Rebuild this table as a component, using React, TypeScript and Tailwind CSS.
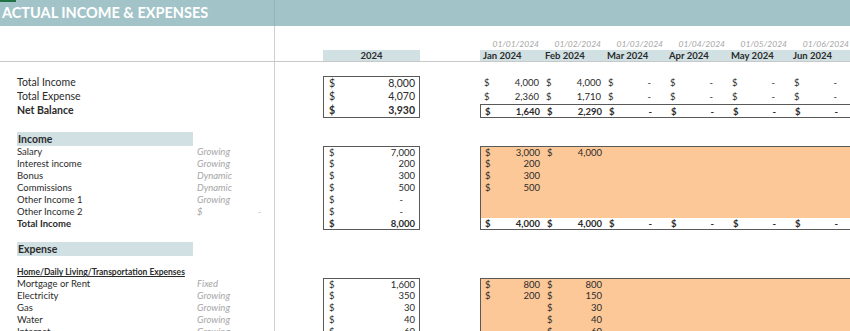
import clsx from "clsx";

const MONTHS = ["Jan 2024", "Feb 2024", "Mar 2024", "Apr 2024", "May 2024", "Jun 2024"];
const DATES = ["01/01/2024", "01/02/2024", "01/03/2024", "01/04/2024", "01/05/2024", "01/06/2024"];

type Row = {
  label: string;
  kind?: string;
  year?: string;
  months?: (string | undefined)[];
  bold?: boolean;
};

const SUMMARY: Row[] = [
  { label: "Total Income", year: "8,000", months: ["4,000", "4,000", "-", "-", "-", "-"] },
  { label: "Total Expense", year: "4,070", months: ["2,360", "1,710", "-", "-", "-", "-"] },
  { label: "Net Balance", year: "3,930", months: ["1,640", "2,290", "-", "-", "-", "-"], bold: true },
];

const INCOME: Row[] = [
  { label: "Salary", kind: "Growing", year: "7,000", months: ["3,000", "4,000"] },
  { label: "Interest income", kind: "Growing", year: "200", months: ["200"] },
  { label: "Bonus", kind: "Dynamic", year: "300", months: ["300"] },
  { label: "Commissions", kind: "Dynamic", year: "500", months: ["500"] },
  { label: "Other Income 1", kind: "Growing", year: "-" },
  { label: "Other Income 2", kind: "$", year: "-" },
];

const EXPENSES: Row[] = [
  { label: "Mortgage or Rent", kind: "Fixed", year: "1,600", months: ["800", "800"] },
  { label: "Electricity", kind: "Growing", year: "350", months: ["200", "150"] },
  { label: "Gas", kind: "Growing", year: "30", months: [undefined, "30"] },
  { label: "Water", kind: "Growing", year: "40", months: [undefined, "40"] },
  { label: "Internet", kind: "Growing", year: "60", months: [undefined, "60"] },
];

function Amount({ v, className }: { v?: string; className?: string }) {
  if (v === undefined) return <div className={className} />;
  return (
    <div className={clsx("flex justify-between", className)}>
      <span>$</span>
      <span className={v === "-" ? "pr-[12px]" : ""}>{v}</span>
    </div>
  );
}

function MonthCells({ values }: { values?: (string | undefined)[] }) {
  return (
    <>
      {(values ?? []).map((v, j) => (
        <Amount key={j} v={v} className="w-[62px] shrink-0 pl-[4px] pr-[3px]" />
      ))}
    </>
  );
}

// left part: margin + label + type column, ends at the divider line
function Left({ label, kind, className }: { label?: string; kind?: string; className?: string }) {
  return (
    <div className="flex h-full w-[275px] shrink-0 border-r border-[#cfcfcf]">
      <div className="w-[17px] shrink-0" />
      <div className={clsx("w-[176px] shrink-0 whitespace-nowrap", className)}>{label}</div>
      {kind === "$" ? (
        <div className="flex w-[68px] justify-between pl-[4px] italic text-[#a6a6a6]">
          <span>$</span>
          <span>-</span>
        </div>
      ) : (
        <div className="pl-[4px] italic text-[#a6a6a6]">{kind}</div>
      )}
    </div>
  );
}

function YearBox({ v, edge, bold }: { v?: string; edge?: "top" | "bottom"; bold?: boolean }) {
  return (
    <Amount
      v={v}
      className={clsx(
        "h-full w-[97px] shrink-0 border-x border-[#595959] pl-[5px] pr-[4px]",
        edge === "top" && "border-t",
        edge === "bottom" && "border-b",
        bold && "font-bold",
      )}
    />
  );
}

export default function App() {
  return (
    <div className="relative h-[331px] w-[850px] overflow-hidden bg-white font-[family-name:Lato,'Noto_Sans',sans-serif] text-[#2b2b2b]">
      <div className="absolute left-0 top-0 h-[2px] w-[16px] bg-[#217346]" />

      {/* title band */}
      <div className="flex h-[26px] bg-[#a2c4c9]">
        <div className="flex w-[275px] shrink-0 items-center border-r border-[#93b4b9] pl-[2px] text-[14.5px] font-bold text-white">
          ACTUAL INCOME &amp; EXPENSES
        </div>
      </div>

      <div className="flex h-[12px]">
        <Left />
      </div>

      {/* dates */}
      <div className="flex h-[12px] text-[8.5px] italic leading-[12px] text-[#a6a6a6]">
        <Left />
        <div className="w-[205px] shrink-0" />
        {DATES.map((d) => (
          <div key={d} className="w-[62px] shrink-0 pr-[3px] text-right">
            {d}
          </div>
        ))}
      </div>

      {/* column headings */}
      <div className="flex h-[12px] border-b border-[#c8c8c8] text-[9.5px] font-bold leading-[12px]">
        <Left />
        <div className="w-[48px] shrink-0" />
        <div className="w-[97px] shrink-0 bg-[#d0e0e3] text-center">2024</div>
        <div className="w-[60px] shrink-0" />
        {MONTHS.map((m) => (
          <div key={m} className="w-[62px] shrink-0 bg-[#d0e0e3] pl-[3px]">
            {m}
          </div>
        ))}
      </div>

      <div className="flex h-[14px]">
        <Left />
      </div>

      {/* summary */}
      {SUMMARY.map((r, i) => (
        <div key={r.label} className={clsx("flex h-[14px] text-[10.5px] leading-[13px]", r.bold && "font-bold")}>
          <Left label={r.label} />
          <div className="w-[48px] shrink-0" />
          <YearBox v={r.year} edge={i === 0 ? "top" : i === 2 ? "bottom" : undefined} />
          <div className="w-[60px] shrink-0" />
          <div className={clsx("flex w-[370px] shrink-0 text-[9.5px]", r.bold && "border-y border-l border-[#595959]")}>
            <MonthCells values={r.months} />
          </div>
        </div>
      ))}

      <div className="flex h-[14px]">
        <Left />
      </div>

      {/* income */}
      <div className="flex h-[14px] text-[10.5px] font-bold leading-[14px]">
        <div className="flex h-full w-[275px] shrink-0 border-r border-[#cfcfcf]">
          <div className="w-[17px] shrink-0" />
          <div className="w-[176px] shrink-0 bg-[#d0e0e3] pl-[1px]">Income</div>
        </div>
      </div>

      {INCOME.map((r, i) => (
        <div key={r.label} className="flex h-[12px] text-[9.5px] leading-[12px]">
          <Left label={r.label} kind={r.kind} />
          <div className="w-[48px] shrink-0" />
          <YearBox v={r.year} edge={i === 0 ? "top" : undefined} />
          <div className="w-[60px] shrink-0" />
          <div className={clsx("flex w-[370px] shrink-0 border-l border-[#595959] bg-[#fdc898]", i === 0 && "border-t")}>
            <MonthCells values={r.months} />
          </div>
        </div>
      ))}

      <div className="flex h-[12px] text-[9.5px] font-bold leading-[11px]">
        <Left label="Total Income" />
        <div className="w-[48px] shrink-0" />
        <YearBox v="8,000" edge="bottom" />
        <div className="w-[60px] shrink-0" />
        <div className="flex w-[370px] shrink-0 border-b border-l border-[#595959]">
          <MonthCells values={["4,000", "4,000", "-", "-", "-", "-"]} />
        </div>
      </div>

      <div className="flex h-[12px]">
        <Left />
      </div>

      {/* expense */}
      <div className="flex h-[14px] text-[10.5px] font-bold leading-[14px]">
        <div className="flex h-full w-[275px] shrink-0 border-r border-[#cfcfcf]">
          <div className="w-[17px] shrink-0" />
          <div className="w-[176px] shrink-0 bg-[#d0e0e3] pl-[1px]">Expense</div>
        </div>
      </div>

      <div className="flex h-[10px]">
        <Left />
      </div>

      <div className="flex h-[12px] text-[8.5px] leading-[12px]">
        <Left label="Home/Daily Living/Transportation Expenses" className="font-bold underline" />
      </div>

      {EXPENSES.map((r, i) => (
        <div key={r.label} className="flex h-[12px] text-[9.5px] leading-[12px]">
          <Left label={r.label} kind={r.kind} />
          <div className="w-[48px] shrink-0" />
          <YearBox v={r.year} edge={i === 0 ? "top" : undefined} />
          <div className="w-[60px] shrink-0" />
          <div className={clsx("flex w-[370px] shrink-0 border-l border-[#595959] bg-[#fdc898]", i === 0 && "border-t")}>
            <MonthCells values={r.months} />
          </div>
        </div>
      ))}
    </div>
  );
}
